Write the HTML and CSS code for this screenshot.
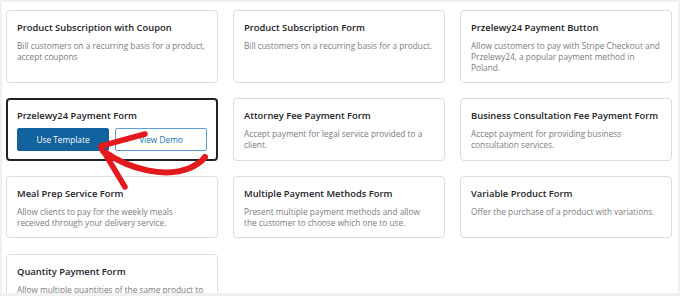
FILE: index.html
```html
<!DOCTYPE html>
<html lang="en">
<head>
<meta charset="utf-8">
<title>Templates</title>
<link rel="stylesheet" href="styles.css">
</head>
<body>
<div class="panel">
  <div class="grid">
    <div class="card">
      <h3 class="title">Product Subscription with Coupon</h3>
      <p class="desc">Bill customers on a recurring basis for a product, accept coupons</p>
    </div>
    <div class="card">
      <h3 class="title">Product Subscription Form</h3>
      <p class="desc">Bill customers on a recurring basis for a product.</p>
    </div>
    <div class="card">
      <h3 class="title">Przelewy24 Payment Button</h3>
      <p class="desc">Allow customers to pay with Stripe Checkout and Przelewy24, a popular payment method in Poland.</p>
    </div>
    <div class="card card-active">
      <h3 class="title">Przelewy24 Payment Form</h3>
      <div class="actions">
        <button class="btn btn-primary">Use Template</button>
        <button class="btn btn-secondary">View Demo</button>
      </div>
    </div>
    <div class="card">
      <h3 class="title">Attorney Fee Payment Form</h3>
      <p class="desc">Accept payment for legal service provided to a client.</p>
    </div>
    <div class="card">
      <h3 class="title">Business Consultation Fee Payment Form</h3>
      <p class="desc">Accept payment for providing business consultation services.</p>
    </div>
    <div class="card">
      <h3 class="title">Meal Prep Service Form</h3>
      <p class="desc">Allow clients to pay for the weekly meals received through your delivery service.</p>
    </div>
    <div class="card">
      <h3 class="title">Multiple Payment Methods Form</h3>
      <p class="desc">Present multiple payment methods and allow the customer to choose which one to use.</p>
    </div>
    <div class="card">
      <h3 class="title">Variable Product Form</h3>
      <p class="desc">Offer the purchase of a product with variations.</p>
    </div>
    <div class="card card-last">
      <h3 class="title">Quantity Payment Form</h3>
      <p class="desc">Allow multiple quantities of the same product to be purchased in a single payment.</p>
    </div>
  </div>
  <svg class="arrow" width="680" height="296" viewBox="0 0 680 296" aria-hidden="true">
    <g fill="none" stroke="#e3191c" stroke-linecap="round" stroke-linejoin="round">
      <path d="M101 146 L145 134" stroke-width="5.5"/>
      <path d="M101 147 L125 187" stroke-width="5.5"/>
      <path d="M103 151 C 130 170, 165 178, 190 168 C 198 164, 203 160, 205 157" stroke-width="6"/>
    </g>
  </svg>
</div>
</body>
</html>
```
FILE: styles.css
```css
html, body {
  margin: 0;
  padding: 0;
}
body {
  background: #f0f0f1;
  font-family: "Open Sans", "Noto Sans", "DejaVu Sans", sans-serif;
  width: 680px;
  height: 296px;
  overflow: hidden;
}
.panel {
  position: relative;
  background: #ffffff;
  margin: 2px 2px 0 2px;
  height: 291px;
  padding: 8px 0 0 4px;
  box-sizing: border-box;
  overflow: hidden;
}
.grid {
  display: grid;
  grid-template-columns: 212px 212px 212px;
  column-gap: 15px;
  row-gap: 15px;
}
.card {
  border: 1px solid #dcdcde;
  border-radius: 4px;
  padding: 10px 10px 9px 10px;
  background: #fff;
}
.card-last {
  margin-top: 1px;
}
.card-active {
  border: 2px solid #1d2327;
  padding: 9px 9px 8px 9px;
}
.title {
  margin: 0 0 5px 0;
  font-size: 9.4px;
  line-height: 14px;
  font-weight: 600;
  color: #1d2327;
}
.desc {
  margin: 0;
  font-size: 8.3px;
  line-height: 11px;
  color: #787c82;
}
.actions {
  display: flex;
  gap: 6px;
}
.btn {
  font-family: inherit;
  width: 93px;
  height: 23px;
  font-size: 8.3px;
  border-radius: 2px;
  padding: 0;
  cursor: pointer;
}
.btn-primary {
  background: #12629f;
  color: #ffffff;
  border: 1px solid #12629f;
}
.btn-secondary {
  background: #ffffff;
  color: #2271b1;
  border: 1px solid #5b9dd6;
}
.arrow {
  position: absolute;
  left: -2px;
  top: -2px;
  pointer-events: none;
}
```
